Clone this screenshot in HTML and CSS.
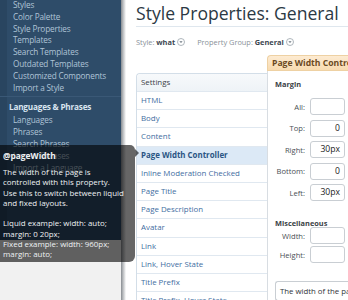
FILE: index.html
```html
<!DOCTYPE html>
<html>
<head>
<meta charset="utf-8">
<link rel="stylesheet" href="styles.css">
</head>
<body>
<div class="page">
  <aside class="sidebar">
    <nav class="nav">
      <ul class="links first">
        <li>Styles</li>
        <li>Color Palette</li>
        <li>Style Properties</li>
        <li>Templates</li>
        <li>Search Templates</li>
        <li>Outdated Templates</li>
        <li>Customized Components</li>
        <li>Import a Style</li>
      </ul>
      <div class="section">
        <h3 class="section-title">Languages &amp; Phrases</h3>
        <ul class="links">
          <li>Languages</li>
          <li>Phrases</li>
          <li>Search Phrases</li>
          <li>Import Phrases</li>
          <li>Import a Language</li>
        </ul>
      </div>
    </nav>
  </aside>
  <main class="main">
    <h1 class="title">Style Properties: General</h1>
    <div class="filters">
      <span class="filter">Style: <b>what</b><svg class="drop" viewBox="0 0 8 8" width="8" height="8"><circle cx="4" cy="4" r="3.5" fill="#fff" stroke="#9aa3ab" stroke-width="0.8"/><path d="M2.4 3.2 L5.6 3.2 L4 5 Z" fill="#6c7781"/></svg></span>
      <span class="filter">Property Group: <b>General</b><svg class="drop" viewBox="0 0 8 8" width="8" height="8"><circle cx="4" cy="4" r="3.5" fill="#fff" stroke="#9aa3ab" stroke-width="0.8"/><path d="M2.4 3.2 L5.6 3.2 L4 5 Z" fill="#6c7781"/></svg></span>
    </div>
    <div class="content">
      <ul class="settings">
        <li class="settings-head">Settings</li>
        <li>HTML</li>
        <li>Body</li>
        <li>Content</li>
        <li class="selected">Page Width Controller</li>
        <li>Inline Moderation Checked</li>
        <li>Page Title</li>
        <li>Page Description</li>
        <li>Avatar</li>
        <li>Link</li>
        <li>Link, Hover State</li>
        <li>Title Prefix</li>
        <li>Title Prefix, Hover State</li>
      </ul>
      <section class="panel">
        <div class="panel-head">Page Width Controller</div>
        <div class="panel-body">
          <div class="group-label">Margin</div>
          <div class="field"><span class="label">All:</span><span class="input"></span></div>
          <div class="field"><span class="label">Top:</span><span class="input">0</span></div>
          <div class="field"><span class="label">Right:</span><span class="input">30px</span></div>
          <div class="field"><span class="label">Bottom:</span><span class="input">0</span></div>
          <div class="field"><span class="label">Left:</span><span class="input">30px</span></div>
          <div class="group-label misc">Miscellaneous</div>
          <div class="field tight"><span class="label">Width:</span><span class="input"></span></div>
          <div class="field tight"><span class="label">Height:</span><span class="input"></span></div>
          <div class="explain">The width of the page is controlled with this property.</div>
        </div>
      </section>
    </div>
  </main>
  <div class="tooltip">
    <div class="tip-title">@pageWidth</div>
    <div class="tip-text">The width of the page is<br>controlled with this property.<br>Use this to switch between liquid<br>and fixed layouts.<br><br>Liquid example: width: auto;<br>margin: 0 20px;<br>Fixed example: width: 960px;<br>margin: auto;</div>
    <span class="tip-arrow"></span>
  </div>
</div>
</body>
</html>
```
FILE: styles.css
```css
html, body {
  margin: 0;
  padding: 0;
}
body {
  width: 348px;
  height: 300px;
  overflow: hidden;
  background: #fff;
  font-family: "Open Sans", "DejaVu Sans", sans-serif;
}
.page {
  position: relative;
  display: flex;
  height: 300px;
  overflow: hidden;
}
.sidebar {
  width: 121px;
  flex: none;
  background: #f1f1f1;
}
.nav {
  height: 240px;
  background: linear-gradient(to right, #294560 0, #294560 7px, #2e4c69 7px);
  overflow: hidden;
}
.links {
  list-style: none;
  margin: 0;
  padding: 0 0 0 13px;
}
.links li {
  font-size: 8.2px;
  letter-spacing: -0.15px;
  line-height: 11.8px;
  color: #b0c4d7;
  white-space: nowrap;
}
.links.first {
  margin-top: -1px;
}
.section {
  margin-top: 3px;
  border-top: 1px solid #3a5876;
  padding-top: 4px;
}
.section-title {
  margin: 0 0 1px 9px;
  font-size: 8.2px;
  letter-spacing: -0.2px;
  line-height: 12px;
  font-weight: bold;
  color: #d9e5f0;
}
.main {
  flex: 1;
  min-width: 0;
  padding-left: 15px;
  background: linear-gradient(to right, #868b90 0, #b9bcbf 2px, #e6e7e8 4px, #fff 5px) no-repeat;
}
.title {
  margin: 0;
  padding: 2px 0 2px;
  font-size: 17.6px;
  line-height: 22px;
  font-weight: normal;
  color: #2b3944;
  white-space: nowrap;
  border-bottom: 1px solid #dfe7ee;
}
.filters {
  margin-top: 10px;
  display: flex;
  gap: 12px;
  font-size: 7.4px;
  line-height: 10px;
  color: #8a9199;
  white-space: nowrap;
}
.filter b {
  color: #3c4650;
}
.drop {
  vertical-align: -1px;
  margin-left: 2px;
}
.content {
  margin-top: 8px;
  display: flex;
  align-items: flex-start;
}
.settings {
  list-style: none;
  margin: 18px 0 0;
  padding: 0;
  width: 130px;
  flex: none;
  border: 1px solid #d3dee8;
  border-right: none;
  border-radius: 4px 0 0 0;
}
.settings li {
  height: 17.2px;
  line-height: 17.2px;
  padding-left: 4px;
  font-size: 7.9px;
  color: #3f6e9f;
  border-top: 1px solid #e0e8f0;
  white-space: nowrap;
}
.settings li.settings-head {
  height: 17px;
  line-height: 17px;
  border-top: none;
  color: #3a4047;
  background: linear-gradient(#f7f9fb, #eef3f7);
  border-radius: 4px 0 0 0;
}
.settings li.selected {
  background: #dce9f6;
  color: #2a5584;
  font-weight: bold;
}
.panel {
  flex: 1;
  min-width: 0;
}
.panel-head {
  height: 14px;
  line-height: 14px;
  padding-left: 4px;
  font-size: 8.6px;
  font-weight: bold;
  color: #6b4a22;
  background: linear-gradient(#fdebd2, #f8dbb0);
  border: 1px solid #eed1a3;
  border-right: none;
  border-radius: 4px 0 0 0;
  white-space: nowrap;
  overflow: hidden;
}
.panel-body {
  border-left: 1px solid #d8dde2;
  padding: 8px 0 0 7px;
  height: 240px;
}
.group-label {
  font-size: 7.4px;
  line-height: 10px;
  font-weight: bold;
  color: #3a3f45;
  margin-bottom: 9px;
}
.group-label.misc {
  margin-top: 18px;
  line-height: 8px;
  margin-bottom: 0;
}
.field {
  display: flex;
  align-items: center;
  gap: 5px;
  margin-bottom: 4.5px;
}
.field.tight {
  margin-bottom: 2px;
}
.label {
  width: 30px;
  text-align: right;
  font-size: 7.6px;
  color: #4a4f55;
}
.input {
  box-sizing: border-box;
  width: 35px;
  height: 17px;
  border: 1px solid #c9ced3;
  border-radius: 3px;
  background: #fff;
  text-align: right;
  padding-right: 4px;
  font-size: 8.6px;
  line-height: 15px;
  color: #222;
}
.explain {
  margin-top: 18px;
  border: 1px solid #c9ced3;
  border-right: none;
  border-radius: 3px 0 0 3px;
  padding: 4px 4px;
  font-size: 7.8px;
  line-height: 10px;
  color: #2f3338;
  white-space: nowrap;
  overflow: hidden;
}
.tooltip {
  position: absolute;
  left: 0;
  top: 145px;
  width: 135px;
  height: 117px;
  box-sizing: border-box;
  padding: 6px 3px 0 3px;
  background: rgba(0, 0, 0, 0.6);
  border-radius: 0 5px 6px 0;
  color: #eef1f3;
}
.tip-title {
  font-size: 8.4px;
  line-height: 10px;
  font-weight: bold;
}
.tip-text {
  margin-top: 6px;
  font-size: 7.9px;
  line-height: 10.3px;
  white-space: nowrap;
}
.tip-arrow {
  position: absolute;
  right: -4px;
  top: 4px;
  width: 0;
  height: 0;
  border-top: 4px solid transparent;
  border-bottom: 4px solid transparent;
  border-left: 4px solid rgba(0, 0, 0, 0.6);
}
```
